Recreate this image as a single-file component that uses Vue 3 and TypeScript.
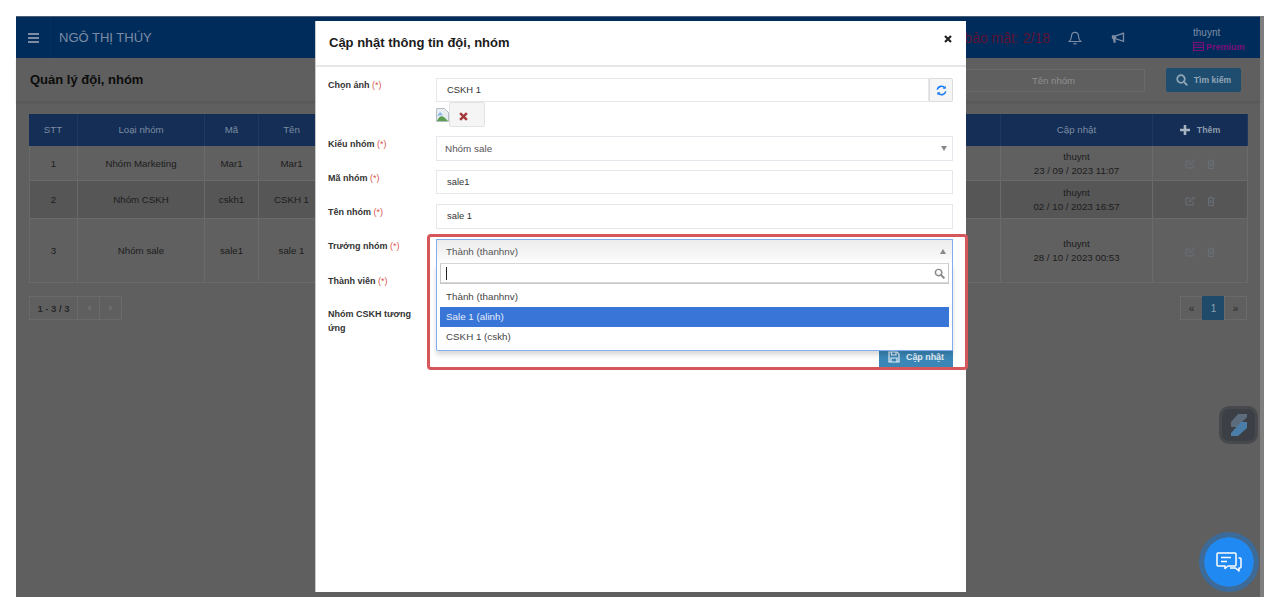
<script setup lang="ts">
interface Row { stt: number; type: string; code: string; name: string; user: string; date: string; h: number; alt: boolean }
const rows: Row[] = [
  { stt: 1, type: 'Nhóm Marketing', code: 'Mar1', name: 'Mar1', user: 'thuynt', date: '23 / 09 / 2023 11:07', h: 35, alt: false },
  { stt: 2, type: 'Nhóm CSKH', code: 'cskh1', name: 'CSKH 1', user: 'thuynt', date: '02 / 10 / 2023 16:57', h: 38, alt: true },
  { stt: 3, type: 'Nhóm sale', code: 'sale1', name: 'sale 1', user: 'thuynt', date: '28 / 10 / 2023 00:53', h: 64, alt: false },
]
const options = ['Thành (thanhnv)', 'Sale 1 (alinh)', 'CSKH 1 (cskh)']
</script>

<template>
  <div class="page">
    <div class="screen">
      <header class="topbar">
        <div class="burger"><span></span><span></span><span></span></div>
        <div class="brand">NGÔ THỊ THÚY</div>
        <div class="alert">Cảnh báo bảo mật: 2/18</div>
        <svg class="bell" width="14" height="14" viewBox="0 0 16 16" fill="none" stroke="#7d8ca3" stroke-width="1.3">
          <path d="M8 1.5c-2.8 0-4 2-4 4.5 0 3-1 4.5-2.5 6h13C13 10.500 12 9 12 6c0-2.500-1.200-4.500-4-4.500z" />
          <path d="M6.500 13.500c.3 1 .8 1.300 1.500 1.300s1.200-.3 1.500-1.300" />
        </svg>
        <svg class="horn" width="14" height="13" viewBox="0 0 16 14" fill="#7d8ca3">
          <path d="M15 1 5 4.500H1v4h1l1 4.500h2.500L5 9l10 3.500V1zm-1.500 2.200v7.100L6 7.800V5.600z" />
        </svg>
        <div class="user">
          <div class="uname">thuynt</div>
          <div class="prem">
            <svg width="11" height="9" viewBox="0 0 11 9" fill="none" stroke="#7b0f78"><rect x=".5" y=".5" width="10" height="8" /><path d="M.5 3h10M.5 5.500h10" /></svg>
            Premium
          </div>
        </div>
      </header>

      <div class="titlebar">
        <h1>Quản lý đội, nhóm</h1>
        <div class="search-input">Tên nhóm</div>
        <div class="search-btn">
          <svg width="12" height="12" viewBox="0 0 12 12" fill="none" stroke="#8fa5b6" stroke-width="1.800"><circle cx="5" cy="5" r="3.800" /><path d="m8 8 3.300 3.300" /></svg>
          Tìm kiếm
        </div>
      </div>

      <div class="content">
        <div class="table">
          <div class="tr thead">
            <div class="c c1">STT</div>
            <div class="c c2">Loại nhóm</div>
            <div class="c c3">Mã</div>
            <div class="c c4">Tên</div>
            <div class="c c5"></div>
            <div class="c c6">Cập nhật</div>
            <div class="c c7 add">
              <svg width="10" height="10" viewBox="0 0 10 10" fill="#a9b4c2"><path d="M3.700 0h2.600v3.700H10v2.600H6.300V10H3.700V6.300H0V3.700h3.700z" /></svg>
              Thêm
            </div>
          </div>
          <div v-for="r in rows" :key="r.stt" class="tr" :class="{ alt: r.alt }" :style="{ height: r.h + 'px' }">
            <div class="c c1">{{ r.stt }}</div>
            <div class="c c2">{{ r.type }}</div>
            <div class="c c3">{{ r.code }}</div>
            <div class="c c4">{{ r.name }}</div>
            <div class="c c5"></div>
            <div class="c c6 stack"><span>{{ r.user }}</span><span>{{ r.date }}</span></div>
            <div class="c c7 acts">
              <svg width="11" height="10" viewBox="0 0 11 10" fill="none" stroke="#686e76"><path d="M8 6v3H1V2h4" /><path d="m4 6 .4-1.500L9 .8l1 1-4.500 3.800z" /></svg>
              <svg width="8" height="10" viewBox="0 0 8 10" fill="none" stroke="#686e76"><path d="M.5 2h7M1.500 2v7.500h5V2M3 .8h2M3.200 4v3.500M4.800 4v3.500" /></svg>
            </div>
          </div>
        </div>

        <div class="pager-row">
          <div class="pager">
            <span class="p count">1 - 3 / 3</span><span class="p w1"><i class="tri left"></i></span><span class="p w2"><i class="tri right"></i></span>
          </div>
          <div class="pager">
            <span class="p w3">«</span><span class="p w3 on">1</span><span class="p w3">»</span>
          </div>
        </div>
      </div>

      <div class="modal">
        <div class="m-head">
          <h2>Cập nhật thông tin đội, nhóm</h2>
          <svg class="close" width="8" height="8" viewBox="0 0 8 8" stroke="#222" stroke-width="2.200"><path d="m1 1 6 6M7 1 1 7" /></svg>
        </div>
        <div class="m-body">
          <div class="row r1">
            <label>Chọn ảnh <em>(*)</em></label>
            <div class="ctl">
              <div class="group">
                <div class="input grow">CSKH 1</div>
                <div class="addon">
                  <svg width="11" height="11" viewBox="0 0 12 12" fill="none" stroke="#1a7bf2" stroke-width="1.800">
                    <path d="M1.300 5A4.800 4.800 0 0 1 9.700 3.200M10.700 7a4.800 4.800 0 0 1-8.400 1.800" />
                    <path d="M10.500.8v3.300H7.200zM1.500 11.200V7.900h3.300z" fill="#1a7bf2" stroke="none" />
                  </svg>
                </div>
              </div>
              <div class="thumb">
                <svg width="13" height="14" viewBox="0 0 13 14"><path d="M.5.500h8l4 4v9H.500z" fill="#e8edf2" stroke="#b5bcc4" /><path d="M1 13c2-5 5-6 8-3l3 3z" fill="#5b9e4f" /><path d="M1 8l3-4 3 3z" fill="#8fb7e6" /></svg>
                <div class="del">
                  <svg width="9" height="9" viewBox="0 0 8 8" stroke="#a33a3a" stroke-width="2.200"><path d="m1 1 6 6M7 1 1 7" /></svg>
                </div>
              </div>
            </div>
          </div>

          <div class="row r2">
            <label>Kiểu nhóm <em>(*)</em></label>
            <div class="ctl"><div class="input select">Nhóm sale<i class="down"></i></div></div>
          </div>
          <div class="row r3">
            <label>Mã nhóm <em>(*)</em></label>
            <div class="ctl"><div class="input">sale1</div></div>
          </div>
          <div class="row r4">
            <label>Tên nhóm <em>(*)</em></label>
            <div class="ctl"><div class="input">sale 1</div></div>
          </div>
          <div class="row r5">
            <label>Trưởng nhóm <em>(*)</em></label>
            <div class="ctl"></div>
          </div>
          <div class="row r6">
            <label>Thành viên <em>(*)</em></label>
            <div class="ctl"></div>
          </div>
          <div class="row r7">
            <label>Nhóm CSKH tương ứng</label>
            <div class="ctl"></div>
          </div>
          <div class="foot">
            <div class="save">
              <svg width="12" height="12" viewBox="0 0 12 12" fill="none" stroke="#e4eef5" stroke-width="1.200"><path d="M1 1h8l2 2v8H1z" /><path d="M3.500 1v3h4.500V1M3 11V7h6v4" /></svg>
              Cập nhật
            </div>
          </div>
        </div>

        <div class="chosen">
          <div class="chosen-head">Thành (thanhnv)<i class="up"></i></div>
          <div class="chosen-drop">
            <div class="chosen-search">
              <span class="caret"></span>
              <svg width="11" height="11" viewBox="0 0 12 12" fill="none" stroke="#8a8a8a" stroke-width="1.600"><circle cx="5" cy="5" r="3.500" /><path d="m7.800 7.800 3.500 3.500" stroke-width="2.200" /></svg>
            </div>
            <ul>
              <li v-for="(o, i) in options" :key="o" :class="{ hl: i === 1 }">{{ o }}</li>
            </ul>
          </div>
        </div>
        <div class="callout"></div>
      </div>

      <div class="logo-fab">
        <svg width="18" height="22" viewBox="0 0 18 22">
          <path d="M8 0h9v3L7 13H1V8z" fill="#5c6c7c" />
          <path d="M17 8v6l-9 8H1v-3L11 8z" fill="#4a7ea8" />
        </svg>
      </div>
      <div class="chat-fab">
        <svg width="26" height="20" viewBox="0 0 26 20" fill="none" stroke="#fff" stroke-width="1.500" stroke-linejoin="round">
          <path d="M2 1h17a1 1 0 0 1 1 1v11a1 1 0 0 1-1 1h-7l-3 2.500V14H2a1 1 0 0 1-1-1V2a1 1 0 0 1 1-1z" />
          <path d="M5 5.500h10M5 9.500h6" />
          <path d="M22.500 6h1.500a1 1 0 0 1 1 1v8a1 1 0 0 1-1 1h-1v3l-3.500-3H14" />
        </svg>
      </div>
    </div>
  </div>
</template>

<style>
html, body { margin: 0; background: #fff; }
</style>

<style scoped>
* { box-sizing: border-box; }
.page { width: 1280px; height: 612px; padding: 16px 16px 15px; background: #fff; font-family: "Liberation Sans", Arial, sans-serif; overflow: hidden; }
.screen { position: relative; width: 1248px; height: 581px; background: #5f5f5f; border-right: 4px solid #7e7e7e; }

.topbar { height: 42px; background: #002c5c; display: flex; align-items: center; border-top: 1px solid #4c5f78; }
.burger { width: 35px; height: 41px; margin-right: 8px; padding: 16px 0 0 12px; display: flex; flex-direction: column; gap: 2px; border-right: 1px solid #082f5c; }
.burger span { width: 11px; height: 2px; background: #7d8ca3; }
.brand { font-size: 13px; color: #7d8ca3; margin-left: 0; width: 600px; }
.alert { margin-left: auto; margin-right: 18px; font-size: 14px; color: #5f1233; }
.bell { margin-right: 29px; }
.horn { margin-right: 68px; }
.user { width: 67px; font-size: 10px; line-height: 14px; color: #7d8ca3; padding-top: 4px; }
.prem { display: flex; align-items: center; gap: 2px; color: #7b0f78; font-size: 9px; font-weight: bold; }

.titlebar { height: 44px; display: flex; align-items: center; padding: 0 19px 0 14px; border-bottom: 1px solid #585858; box-shadow: 0 1px 2px rgba(0,0,0,.1); }
.titlebar h1 { margin: 0; font-size: 13px; font-weight: bold; color: #0c0c0c; flex: 1; }
.search-input { width: 185px; height: 23px; margin: 1px 21px 0 0; border: 1px solid #6a6a6a; font-size: 9.600px; line-height: 22px; color: #8f8f8f; text-align: center; padding-left: 2px; border-radius: 1px; }
.search-btn { width: 75px; height: 24px; background: #1f4d70; border-radius: 2px; display: flex; align-items: center; justify-content: center; gap: 6px; color: #92a5b5; font-size: 8.600px; font-weight: bold; }

.content { padding: 12px 13px 0 13px; }
.table { width: 1219px; color: #1c1c1c; font-size: 9.700px; }
.tr { display: flex; border-bottom: 1px solid #6a6a6a; background: #606060; }
.tr.alt { background: #565656; }
.tr.thead { height: 32px; background: #142e55; border-bottom: 0; color: #7d8ca3; }
.c { display: flex; align-items: center; justify-content: center; border-right: 1px solid #6a6a6a; text-align: center; }
.thead .c { border-right-color: #1c3a63; padding-bottom: 1px; }
.c1 { width: 49px; border-left: 1px solid #6a6a6a; }
.thead .c1 { border-left: 0; }
.c2 { width: 127px; }
.c3 { width: 54px; }
.c4 { width: 66px; }
.c5 { width: 676px; }
.c6 { width: 152px; }
.c7 { width: 95px; }
.stack { flex-direction: column; line-height: 14px; padding-top: 1px; }
.add { gap: 7px; font-weight: bold; font-size: 8.800px; color: #8d9bad; }
.acts { gap: 11px; padding-top: 2px; }

.pager-row { display: flex; justify-content: space-between; margin: 13px 0 0; width: 1218px; }
.pager { display: flex; height: 24px; }
.p { display: flex; align-items: center; justify-content: center; border: 1px solid #6a6a6a; margin-left: -1px; font-size: 9.500px; color: #2a2a2a; }
.count { width: 49px; margin-left: 0; font-weight: bold; }
.w1, .w2 { width: 23px; }
.tri { width: 0; height: 0; border: 3px solid transparent; }
.tri.left { border-left: 0; border-right: 4px solid #6e6e6e; }
.tri.right { border-right: 0; border-left: 4px solid #6e6e6e; }
.w3 { width: 23px; font-size: 10px; }
.p.on { background: #1f4a6a; color: #8ea3b6; border-color: #1f4a6a; }

.modal { position: absolute; left: 300px; top: 5px; width: 650px; height: 571px; background: #fff; color: #333; box-shadow: -1px 0 0 #c9c9c9; }
.m-head { height: 46px; display: flex; align-items: center; justify-content: space-between; padding: 0 14px 2px 13px; border-bottom: 2px solid #e6e6e6; }
.m-head h2 { margin: 0; font-size: 13px; font-weight: bold; color: #1b1b1b; }
.close { margin-top: -6px; }
.m-body { padding: 11px 12px 0; }
.row { display: grid; grid-template-columns: 108px 517px; }
label { font-size: 9px; font-weight: bold; color: #333; line-height: 14px; padding: 1px 16px 0 0; }
em { font-style: normal; font-weight: normal; color: #d9534f; }
.r1 { height: 58px; }
.r2 { height: 34px; }
.r3 { height: 34px; }
.r4 { height: 35px; }
.r5 { height: 35px; }
.r6 { height: 32px; }
.r7 { height: 37px; }
.r1 label, .r5 label, .r6 label { padding-top: 0; }
.input { height: 24px; border: 1px solid #e6e6ec; padding: 0 10px; font-size: 9.400px; line-height: 22px; color: #333; position: relative; }
.grow { flex: 1; }
.group { display: flex; }
.addon { width: 24px; height: 24px; border: 1px solid #dcdcdc; background: #f5f5f5; display: flex; align-items: center; justify-content: center; border-radius: 0 2px 2px 0; }
.thumb { display: flex; height: 25px; }
.thumb svg:first-child { margin-top: 6px; }
.del { width: 36px; height: 25px; background: #f5f5f5; border: 1px solid #e3e3e3; border-radius: 2px; display: flex; align-items: center; justify-content: flex-start; padding: 0 0 3px 9px; }
.select { height: 25px; line-height: 23px; padding-left: 8px; color: #555; font-size: 9.900px; }
.down { position: absolute; right: 5px; top: 9px; border: 3.500px solid transparent; border-top: 5px solid #888; border-bottom: 0; }
.r4 .input { height: 25px; }
.foot { display: flex; justify-content: flex-end; width: 625px; margin-top: 3px; }
.save { width: 74px; height: 22px; background: #3a87b7; color: #e4eef5; font-size: 8.900px; font-weight: bold; display: flex; align-items: center; justify-content: center; gap: 6px; }

.chosen { position: absolute; left: 120px; top: 218px; width: 517px; font-size: 9.800px; color: #444; }
.chosen-head { position: relative; height: 24px; border: 1px solid #82aef0; border-bottom: 0; background: linear-gradient(#ececec, #f7f7f7 70%, #fff); padding-left: 9px; line-height: 24px; color: #555; }
.up { position: absolute; right: 6px; top: 9px; border: 3.500px solid transparent; border-bottom: 5px solid #888; border-top: 0; }
.chosen-drop { position: relative; height: 88px; background: #fff; border: 1px solid #82aef0; border-top: 0; border-radius: 0 0 2px 2px; box-shadow: 0 4px 5px rgba(0,0,0,.15); padding: 0 3px; }
.chosen-search { height: 21px; border: 1px solid #c8c8c8; border-top-color: #d6d6d6; box-shadow: inset 0 -1px 0 #d8d8d8; display: flex; align-items: center; justify-content: space-between; padding: 0 3px 0 5px; }
.caret { width: 1px; height: 13px; background: #222; }
ul { list-style: none; margin: 3px 0 0; padding: 0; }
li { height: 20px; line-height: 20px; padding-left: 6px; color: #444; }
li.hl { background: #3875d7; color: #e6eefb; }
.callout { position: absolute; left: 111px; top: 213px; width: 541px; height: 136px; border: 3px solid #d6575a; border-radius: 4px; pointer-events: none; }

.logo-fab { position: absolute; left: 1203px; top: 390px; width: 39px; height: 38px; background: #3c3f45; border: 3px solid #47494d; border-radius: 10px; display: flex; align-items: center; justify-content: center; }
.chat-fab { position: absolute; left: 1183px; top: 516px; width: 60px; height: 60px; background: #2089f2; border: 5px solid #3d6b99; border-radius: 50%; display: flex; align-items: center; justify-content: center; background-clip: padding-box; }
</style>
